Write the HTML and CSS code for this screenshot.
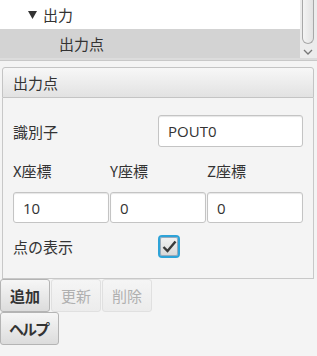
FILE: index.html
```html
<!DOCTYPE html>
<html lang="ja">

<head>
   <meta charset="UTF-8">
   <meta name="viewport" content="width=device-width, initial-scale=1.0">
   <title>出力点</title>
   <link rel="stylesheet" href="styles.css">
</head>

<body>
   <div class="tree">
      <div class="rows">
         <div class="row">
            <svg class="arrow" width="9" height="8" viewBox="0 0 9 8"><polygon points="0,0 9,0 4.5,8" fill="#333" /></svg>
            <span>出力</span>
         </div>
         <div class="row selected leaf">出力点</div>
      </div>
      <div class="vscroll">
         <div class="thumb"></div>
         <svg class="down" width="10" height="6" viewBox="0 0 10 6"><polyline points="1,1 5,5 9,1" fill="none" stroke="#777" stroke-width="1.3" /></svg>
      </div>
   </div>

   <div class="pane">
      <div class="pane-title">出力点</div>
      <div class="pane-body">
         <div class="line id-line">
            <span class="label">識別子</span>
            <input type="text" class="field wide" value="POUT0">
         </div>
         <div class="coords labels">
            <span class="label">X座標</span>
            <span class="label">Y座標</span>
            <span class="label">Z座標</span>
         </div>
         <div class="coords inputs">
            <input type="text" class="field" value="10">
            <input type="text" class="field" value="0">
            <input type="text" class="field" value="0">
         </div>
         <div class="line show-line">
            <span class="label">点の表示</span>
            <span class="check">
               <svg width="15" height="13" viewBox="0 0 15 13"><polyline points="1.5,7 5.5,11 13.5,1.5" fill="none" stroke="#3a3a3a" stroke-width="2.4" /></svg>
            </span>
         </div>
      </div>
   </div>

   <div class="buttons">
      <button class="btn">追加</button>
      <button class="btn" disabled>更新</button>
      <button class="btn" disabled>削除</button>
   </div>
   <div class="buttons">
      <button class="btn narrow">ヘルプ</button>
   </div>
</body>

</html>
```

FILE: styles.css
```css
body {
   margin: 0;
   background-color: #f4f4f4;
   font-family: "Noto Sans CJK JP", "Open Sans", sans-serif;
   font-size: 15px;
   color: #333;
}

div.tree {
   display: flex;
   height: 58px;
   border-bottom: 2px solid #dcdcdc;
   box-shadow: 0 1px 0 #c8c8c8;
}

.rows {
   flex: 1;
   background-color: white;
}

.row {
   height: 29px;
   display: flex;
   align-items: center;
   padding-left: 28px;
}

.row .arrow {
   margin-right: 6px;
}

.row.selected {
   background-color: #d3d3d3;
   padding-left: 59px;
}

.vscroll {
   width: 17px;
   background-color: #ececec;
}

.thumb {
   margin-left: 2px;
   width: 10px;
   height: 43px;
   border: 1px solid #a8a8a8;
   border-top: none;
   border-radius: 0 0 6px 6px;
   background: linear-gradient(to right, #f4f4f4, #e2e2e2);
}

.down {
   display: block;
   margin: 5px 0 0 3px;
}

div.pane {
   margin: 7px 3px 0 2px;
}

.pane-title {
   height: 29px;
   line-height: 29px;
   padding-left: 10px;
   border: 1px solid #c4c4c4;
   border-radius: 3px 3px 0 0;
   background: linear-gradient(#f7f7f7, #e2e2e2);
}

.pane-body {
   border: 1px solid #c8c8c8;
   border-top: none;
   padding: 17px 10px 20px 10px;
}

.line {
   display: flex;
   align-items: center;
}

.id-line .label,
.show-line .label {
   width: 145px;
}

input.field {
   box-sizing: border-box;
   height: 32px;
   border: 1px solid #c4c4c4;
   border-radius: 3px;
   background-color: white;
   box-shadow: inset 0 1px 1px #e6e6e6;
   padding: 0 9px;
   font-family: "Open Sans", "Noto Sans CJK JP", sans-serif;
   font-size: 15px;
   color: #333;
   outline: none;
}

input.field.wide {
   width: 145px;
   margin-left: 1px;
}

.coords {
   display: grid;
   grid-template-columns: 96px 96px 96px;
   column-gap: 1px;
}

.coords.labels {
   margin-top: 12px;
   height: 22px;
   align-items: center;
}

.coords.inputs {
   margin-top: 11px;
}

.coords.inputs .field {
   width: 100%;
   height: 31px;
}

.show-line {
   margin-top: 12px;
}

.check {
   box-sizing: border-box;
   width: 22px;
   height: 23px;
   border: 2px solid #2ea3d8;
   border-radius: 4px;
   background: linear-gradient(#f2f2f2, #d8d8d8);
   box-shadow: inset 0 0 0 1px #9ab;
   display: flex;
   align-items: center;
   justify-content: center;
}

.buttons {
   display: flex;
   gap: 1px;
}

button.btn {
   height: 33px;
   padding: 0 9px;
   border: 1px solid #b4b4b4;
   border-radius: 3px;
   background: linear-gradient(#f6f6f6, #dcdcdc);
   font-family: "Noto Sans CJK JP", sans-serif;
   font-size: 15px;
   font-weight: bold;
   color: #333;
}

button.btn.narrow {
   letter-spacing: -2px;
   padding: 0 10px 0 8px;
}

button.btn:disabled {
   font-weight: normal;
   color: #b0b0b0;
   border-color: #e0e0e0;
   background: linear-gradient(#f5f5f5, #ececec);
}
```
